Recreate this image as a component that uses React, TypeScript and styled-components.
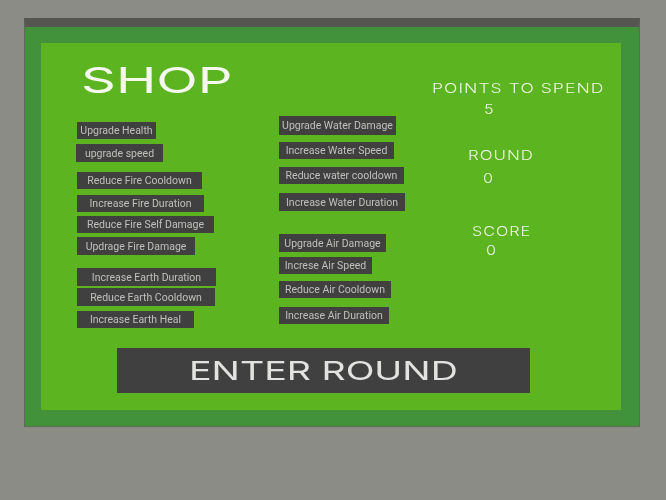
import React from 'react';
import styled, { createGlobalStyle } from 'styled-components';

const GlobalStyle = createGlobalStyle`
    html, body {
        margin: 0;
        background: #8b8c86;
    }
`

const Page = styled.div`
    width: 666px;
    height: 500px;
    padding: 18px 0 0 24px;
    box-sizing: border-box;
    overflow: hidden;
`

const Frame = styled.div`
    width: 616px;
    height: 409px;
    box-sizing: border-box;
    padding: 16px;
    background: #41923a;
    border: 1px solid #5f6a5a;
    border-top: 9px solid #555652;
    filter: blur(0.3px);
`

const Inner = styled.div`
    width: 580px;
    height: 367px;
    background: #5cb420;
`

const Columns = styled.div`
    display: flex;
    height: 305px;
`

const LeftColumn = styled.div`
    width: 238px;
    padding: 16px 0 0 36px;
    box-sizing: border-box;
    display: flex;
    flex-direction: column;
    align-items: flex-start;
`

const MiddleColumn = styled.div`
    width: 153px;
    padding-top: 73px;
    display: flex;
    flex-direction: column;
    align-items: flex-start;
`

const StatsColumn = styled.div`
    padding-top: 37px;
    display: flex;
    flex-direction: column;
    align-items: flex-start;
`

const Wide = styled.span<{ $scale: number }>`
    display: inline-block;
    transform: scaleX(${p => p.$scale});
    transform-origin: left center;
    white-space: nowrap;
`

const Title = styled.h1`
    margin: 0 0 16px 4px;
    height: 42px;
    font: 400 36px/42px Inter, sans-serif;
    color: #f4f8ee;
`

const UpgradeButton = styled.button<{ $width: number; $height: number; $top: number; $left?: number }>`
    width: ${p => p.$width}px;
    height: ${p => p.$height}px;
    margin: ${p => p.$top}px 0 0 ${p => p.$left ?? 0}px;
    padding: 2px 0 0;
    border: 0;
    background: #404040;
    color: #bfc0bc;
    font: 400 10.5px/1 Roboto, sans-serif;
    white-space: nowrap;
`

const StatLabel = styled.div<{ $left: number; $top: number }>`
    margin: ${p => p.$top}px 0 0 ${p => p.$left}px;
    font: 300 13.5px/16px Inter, sans-serif;
    letter-spacing: 0.8px;
    color: #eef5e2;
`

const StatValue = styled.div<{ $left: number; $top: number }>`
    margin: ${p => p.$top}px 0 0 ${p => p.$left}px;
    font: 300 13.5px/16px Inter, sans-serif;
    color: #eef5e2;
`

const EnterButton = styled.button`
    display: block;
    width: 413px;
    height: 45px;
    margin-left: 76px;
    padding: 0 0 0 72px;
    border: 0;
    background: #404040;
    color: #e2e3e0;
    font: 400 26px/45px Inter, sans-serif;
    text-align: left;
`

type Item = { label: string; width: number; height: number; top: number; left?: number }

const leftButtons: Item[] = [
    { label: 'Upgrade Health', width: 79, height: 17, top: 5 },
    { label: 'upgrade speed', width: 87, height: 18, top: 5, left: -1 },
    { label: 'Reduce Fire Cooldown', width: 125, height: 17, top: 10 },
    { label: 'Increase Fire Duration', width: 127, height: 17, top: 6 },
    { label: 'Reduce Fire Self  Damage', width: 137, height: 17, top: 4 },
    { label: 'Updrage Fire Damage', width: 118, height: 18, top: 4 },
    { label: 'Increase Earth Duration', width: 139, height: 18, top: 13 },
    { label: 'Reduce Earth Cooldown', width: 138, height: 18, top: 2 },
    { label: 'Increase Earth Heal', width: 117, height: 17, top: 5 },
]

const middleButtons: Item[] = [
    { label: 'Upgrade Water Damage', width: 117, height: 19, top: 0 },
    { label: 'Increase Water Speed', width: 115, height: 17, top: 7 },
    { label: 'Reduce water cooldown', width: 125, height: 17, top: 8 },
    { label: 'Increase Water Duration', width: 126, height: 18, top: 9 },
    { label: 'Upgrade Air Damage', width: 107, height: 18, top: 23 },
    { label: 'Increse Air Speed', width: 93, height: 17, top: 5 },
    { label: 'Reduce Air Cooldown', width: 112, height: 17, top: 7 },
    { label: 'Increase Air Duration', width: 110, height: 17, top: 9 },
]

const renderButtons = (items: Item[]) =>
    items.map(b => (
        <UpgradeButton key={b.label} $width={b.width} $height={b.height} $top={b.top} $left={b.left}>
            {b.label}
        </UpgradeButton>
    ))

const App = () => {
    return (
        <Page>
            <GlobalStyle />
            <Frame>
                <Inner>
                    <Columns>
                        <LeftColumn>
                            <Title><Wide $scale={1.51}>SHOP</Wide></Title>
                            {renderButtons(leftButtons)}
                        </LeftColumn>
                        <MiddleColumn>{renderButtons(middleButtons)}</MiddleColumn>
                        <StatsColumn>
                            <StatLabel $left={0} $top={0}><Wide $scale={1.3}>POINTS TO SPEND</Wide></StatLabel>
                            <StatValue $left={52} $top={5}><Wide $scale={1.2}>5</Wide></StatValue>
                            <StatLabel $left={36} $top={30}><Wide $scale={1.25}>ROUND</Wide></StatLabel>
                            <StatValue $left={51} $top={7}><Wide $scale={1.2}>0</Wide></StatValue>
                            <StatLabel $left={40} $top={37}><Wide $scale={1.2}>SCORE</Wide></StatLabel>
                            <StatValue $left={54} $top={3}><Wide $scale={1.2}>0</Wide></StatValue>
                        </StatsColumn>
                    </Columns>
                    <EnterButton><Wide $scale={1.445}>ENTER ROUND</Wide></EnterButton>
                </Inner>
            </Frame>
        </Page>
    )
}

export default App;
